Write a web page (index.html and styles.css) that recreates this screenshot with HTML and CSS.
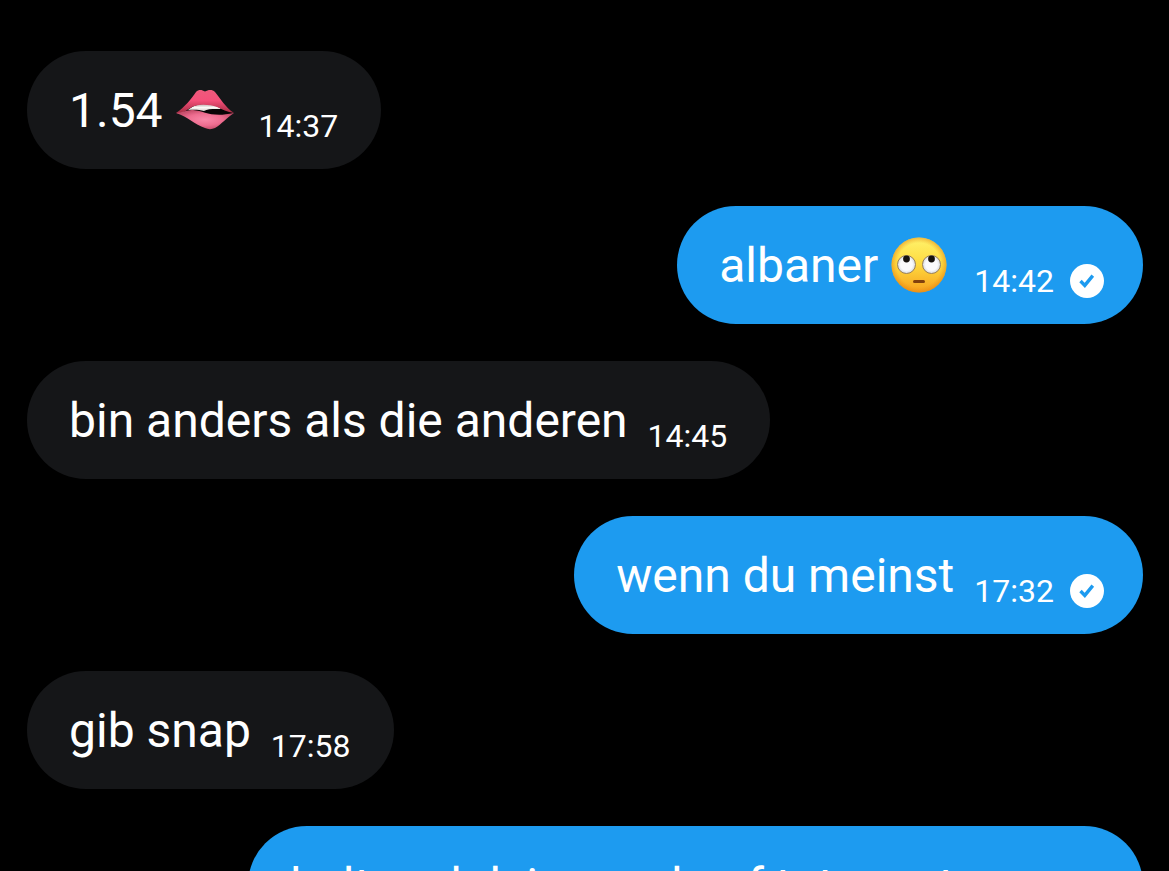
FILE: index.html
```html
<!DOCTYPE html>
<html lang="de">
<head>
<meta charset="utf-8">
<meta name="viewport" content="width=device-width, initial-scale=1">
<title>Chat</title>
<link rel="stylesheet" href="styles.css">
</head>
<body>
<svg width="0" height="0" class="defs" aria-hidden="true">
  <defs>
    <symbol id="check" viewBox="0 0 34 34">
      <circle cx="17" cy="17" r="17" fill="#fff"/>
      <path d="M10.500 17l4.300 4.400 8-9.800" fill="none" stroke="#1d9bf0" stroke-width="3.4"/>
    </symbol>
  </defs>
</svg>
<main class="chat">
  <article class="bubble received">
    <p class="text">1.54
      <svg class="emoji" viewBox="0 0 60 60" role="img" aria-label="Mund">
        <defs>
          <linearGradient id="upper" x1="0" y1="0" x2="0" y2="1">
            <stop offset="0" stop-color="#ee5a7c"/><stop offset=".45" stop-color="#f5507a"/><stop offset="1" stop-color="#a52c42"/>
          </linearGradient>
          <radialGradient id="lower" cx=".5" cy=".5" r=".5">
            <stop offset="0" stop-color="#f988a8"/><stop offset=".6" stop-color="#ee6d90"/><stop offset="1" stop-color="#c9506e"/>
          </radialGradient>
          <linearGradient id="teeth" x1="0" y1="0" x2="0" y2="1">
            <stop offset="0" stop-color="#b9aaa8"/><stop offset=".5" stop-color="#fbf9f7"/><stop offset="1" stop-color="#d9d2cf"/>
          </linearGradient>
        </defs>
        <path d="M10 31C16 26 22 24 30 24c11 0 19 4 28 9-7 4-14 5-21 3-9-3-17-5-27-5z" fill="#080506"/>
        <path d="M13 30c5-4.500 11-6 18-6 6 0 12 2 15 5-6 0-13-.5-17 2-5-1.500-10-1.500-16-1z" fill="url(#teeth)"/>
        <path d="M1 33C10 27 16 19 21 12c3-3 6-2 9-.5 3-1.500 7-2.500 10 .5 6 7 10 15 19 21-7-1-12-4-17-6-8-3-18-3-24-.5C13 29 8 34 1 33z" fill="url(#upper)"/>
        <path d="M1 33c6 0 11-3.500 17-3 12 1 18 8 41 3-8 5-12 11-19 15-3 1.500-7 1.500-10 0C20 45 12 36 1 33z" fill="url(#lower)"/>
      </svg>
    </p>
    <div class="meta"><time>14:37</time></div>
  </article>

  <article class="bubble sent">
    <p class="text">albaner
      <svg class="emoji" viewBox="0 0 60 60" role="img" aria-label="Augenrollen">
        <defs>
          <linearGradient id="face" x1="0" y1="0" x2="0" y2="1">
            <stop offset="0" stop-color="#fff36c"/><stop offset=".5" stop-color="#fed93e"/><stop offset="1" stop-color="#f6a01e"/>
          </linearGradient>
          <radialGradient id="rim">
            <stop offset=".8" stop-color="#e88a12" stop-opacity="0"/><stop offset="1" stop-color="#e07d0c" stop-opacity=".5"/>
          </radialGradient>
          <radialGradient id="eye">
            <stop offset=".65" stop-color="#fafafc"/><stop offset="1" stop-color="#d5d9e0"/>
          </radialGradient>
        </defs>
        <circle cx="29" cy="30" r="27.500" fill="url(#face)"/>
        <circle cx="29" cy="30" r="27.500" fill="url(#rim)"/>
        <circle cx="16.500" cy="29.500" r="9" fill="url(#eye)" stroke="#99805a" stroke-width="1"/>
        <circle cx="41.500" cy="29.500" r="9" fill="url(#eye)" stroke="#99805a" stroke-width="1"/>
        <circle cx="16.500" cy="24" r="3.400" fill="#15110e"/>
        <circle cx="41.500" cy="24" r="3.400" fill="#15110e"/>
        <rect x="23" y="45" width="12" height="3" rx="1.500" fill="#81400d"/>
      </svg>
    </p>
    <div class="meta"><time>14:42</time><svg class="check" role="img" aria-label="Gesendet"><use href="#check"/></svg></div>
  </article>

  <article class="bubble received">
    <p class="text">bin anders als die anderen</p>
    <div class="meta"><time>14:45</time></div>
  </article>

  <article class="bubble sent">
    <p class="text">wenn du meinst</p>
    <div class="meta"><time>17:32</time><svg class="check" role="img" aria-label="Gesendet"><use href="#check"/></svg></div>
  </article>

  <article class="bubble received">
    <p class="text">gib snap</p>
    <div class="meta"><time>17:58</time></div>
  </article>

  <article class="bubble sent">
    <p class="text">halt mal dein maul auf tut ernst</p>
    <div class="meta"><time>17:59</time><svg class="check" role="img" aria-label="Gesendet"><use href="#check"/></svg></div>
  </article>
</main>
</body>
</html>
```
FILE: styles.css
```css
* {
  box-sizing: border-box;
}

body {
  margin: 0;
  background: #000;
  color: #fff;
  font-family: Roboto, "Liberation Sans", sans-serif;
}

.defs {
  position: absolute;
}

.chat {
  display: flex;
  flex-direction: column;
  gap: 37px;
  height: 100vh;
  padding: 51px 26px 0 27px;
  overflow: hidden;
}

.bubble {
  display: flex;
  flex-shrink: 0;
  align-items: flex-end;
  gap: 20px;
  max-width: 90%;
  padding: 32px 43px 23px 42px;
  border-radius: 59px;
}

.received {
  align-self: flex-start;
  background: #151618;
}

.sent {
  align-self: flex-end;
  padding-right: 39px;
  background: #1d9bf0;
}

.text {
  display: flex;
  align-items: center;
  gap: 12px;
  margin: 0 0 7px;
  font-size: 48px;
  line-height: 56px;
}

.emoji {
  width: 60px;
  height: 60px;
  margin: -3px 4px -1px 0;
}

.meta {
  display: flex;
  align-items: center;
  gap: 16px;
  font-size: 32px;
  line-height: 40px;
}

.check {
  width: 34px;
  height: 34px;
}
```
